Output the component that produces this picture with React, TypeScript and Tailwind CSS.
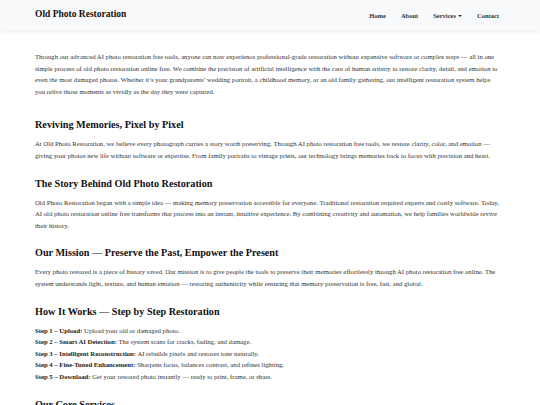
import React from "react";

const steps = [
  ["Step 1 – Upload:", "Upload your old or damaged photo."],
  ["Step 2 – Smart AI Detection:", "The system scans for cracks, fading, and damage."],
  ["Step 3 – Intelligent Reconstruction:", "AI rebuilds pixels and restores tone naturally."],
  ["Step 4 – Fine-Tuned Enhancement:", "Sharpens focus, balances contrast, and refines lighting."],
  ["Step 5 – Download:", "Get your restored photo instantly — ready to print, frame, or share."],
];

function Heading({ children }: { children: React.ReactNode }) {
  return <h2 className="text-[10.2px] leading-[13px] font-bold text-[#111] mt-[15px] mb-[7px]">{children}</h2>;
}

export default function App() {
  return (
    <div className="min-h-screen bg-white text-[#333] [font-family:'Liberation_Serif',serif]">
      <nav className="h-[31px] bg-[#f8f9fa] shadow-[0_1px_3px_rgba(0,0,0,0.08)]">
        <div className="max-w-[470px] mx-auto h-full flex items-center justify-between">
          <span className="text-[9.5px] font-bold text-[#111] -mt-[3px]">Old Photo Restoration</span>
          <ul className="flex items-center gap-[15px] text-[6.5px] font-bold text-[#333] pr-[6px]">
            <li>Home</li>
            <li>About</li>
            <li className="flex items-center gap-[2px]">
              Services
              <span className="inline-block w-0 h-0 border-l-[2px] border-r-[2px] border-t-[2px] border-l-transparent border-r-transparent border-t-[#333]" />
            </li>
            <li>Contact</li>
          </ul>
        </div>
      </nav>
      <main className="max-w-[470px] mx-auto pt-[20px] text-[6.7px] leading-[11.6px]">
        <p className="pr-[6px]">
          Through our advanced AI photo restoration free tools, anyone can now experience professional-grade restoration without expensive software or complex steps — all in one simple process of old photo restoration online free. We combine the precision of artificial intelligence with the care of human artistry to restore clarity, detail, and emotion to even the most damaged photos. Whether it’s your grandparents’ wedding portrait, a childhood memory, or an old family gathering, our intelligent restoration system helps you relive those moments as vividly as the day they were captured.
        </p>
        <div className="h-[6px]" />
        <Heading>Reviving Memories, Pixel by Pixel</Heading>
        <p>
          At Old Photo Restoration, we believe every photograph carries a story worth preserving. Through AI photo restoration free tools, we restore clarity, color, and emotion — giving your photos new life without software or expertise. From family portraits to vintage prints, our technology brings memories back to focus with precision and heart.
        </p>
        <Heading>The Story Behind Old Photo Restoration</Heading>
        <p>
          Old Photo Restoration began with a simple idea — making memory preservation accessible for everyone. Traditional restoration required experts and costly software. Today, AI old photo restoration online free transforms that process into an instant, intuitive experience. By combining creativity and automation, we help families worldwide revive their history.
        </p>
        <Heading>Our Mission — Preserve the Past, Empower the Present</Heading>
        <p>
          Every photo restored is a piece of history saved. Our mission is to give people the tools to preserve their memories effortlessly through AI photo restoration free online. The system understands light, texture, and human emotion — restoring authenticity while ensuring that memory preservation is free, fast, and global.
        </p>
        <Heading>How It Works — Step by Step Restoration</Heading>
        <div>
          {steps.map(([label, text], i) => (
            <p key={i}>
              <strong className="text-[#222]">{label}</strong> {text}
            </p>
          ))}
        </div>
        <Heading>Our Core Services</Heading>
        <p>
          From scratch removal to colorization, our AI tools handle every kind of damage with care.
        </p>
      </main>
    </div>
  );
}
